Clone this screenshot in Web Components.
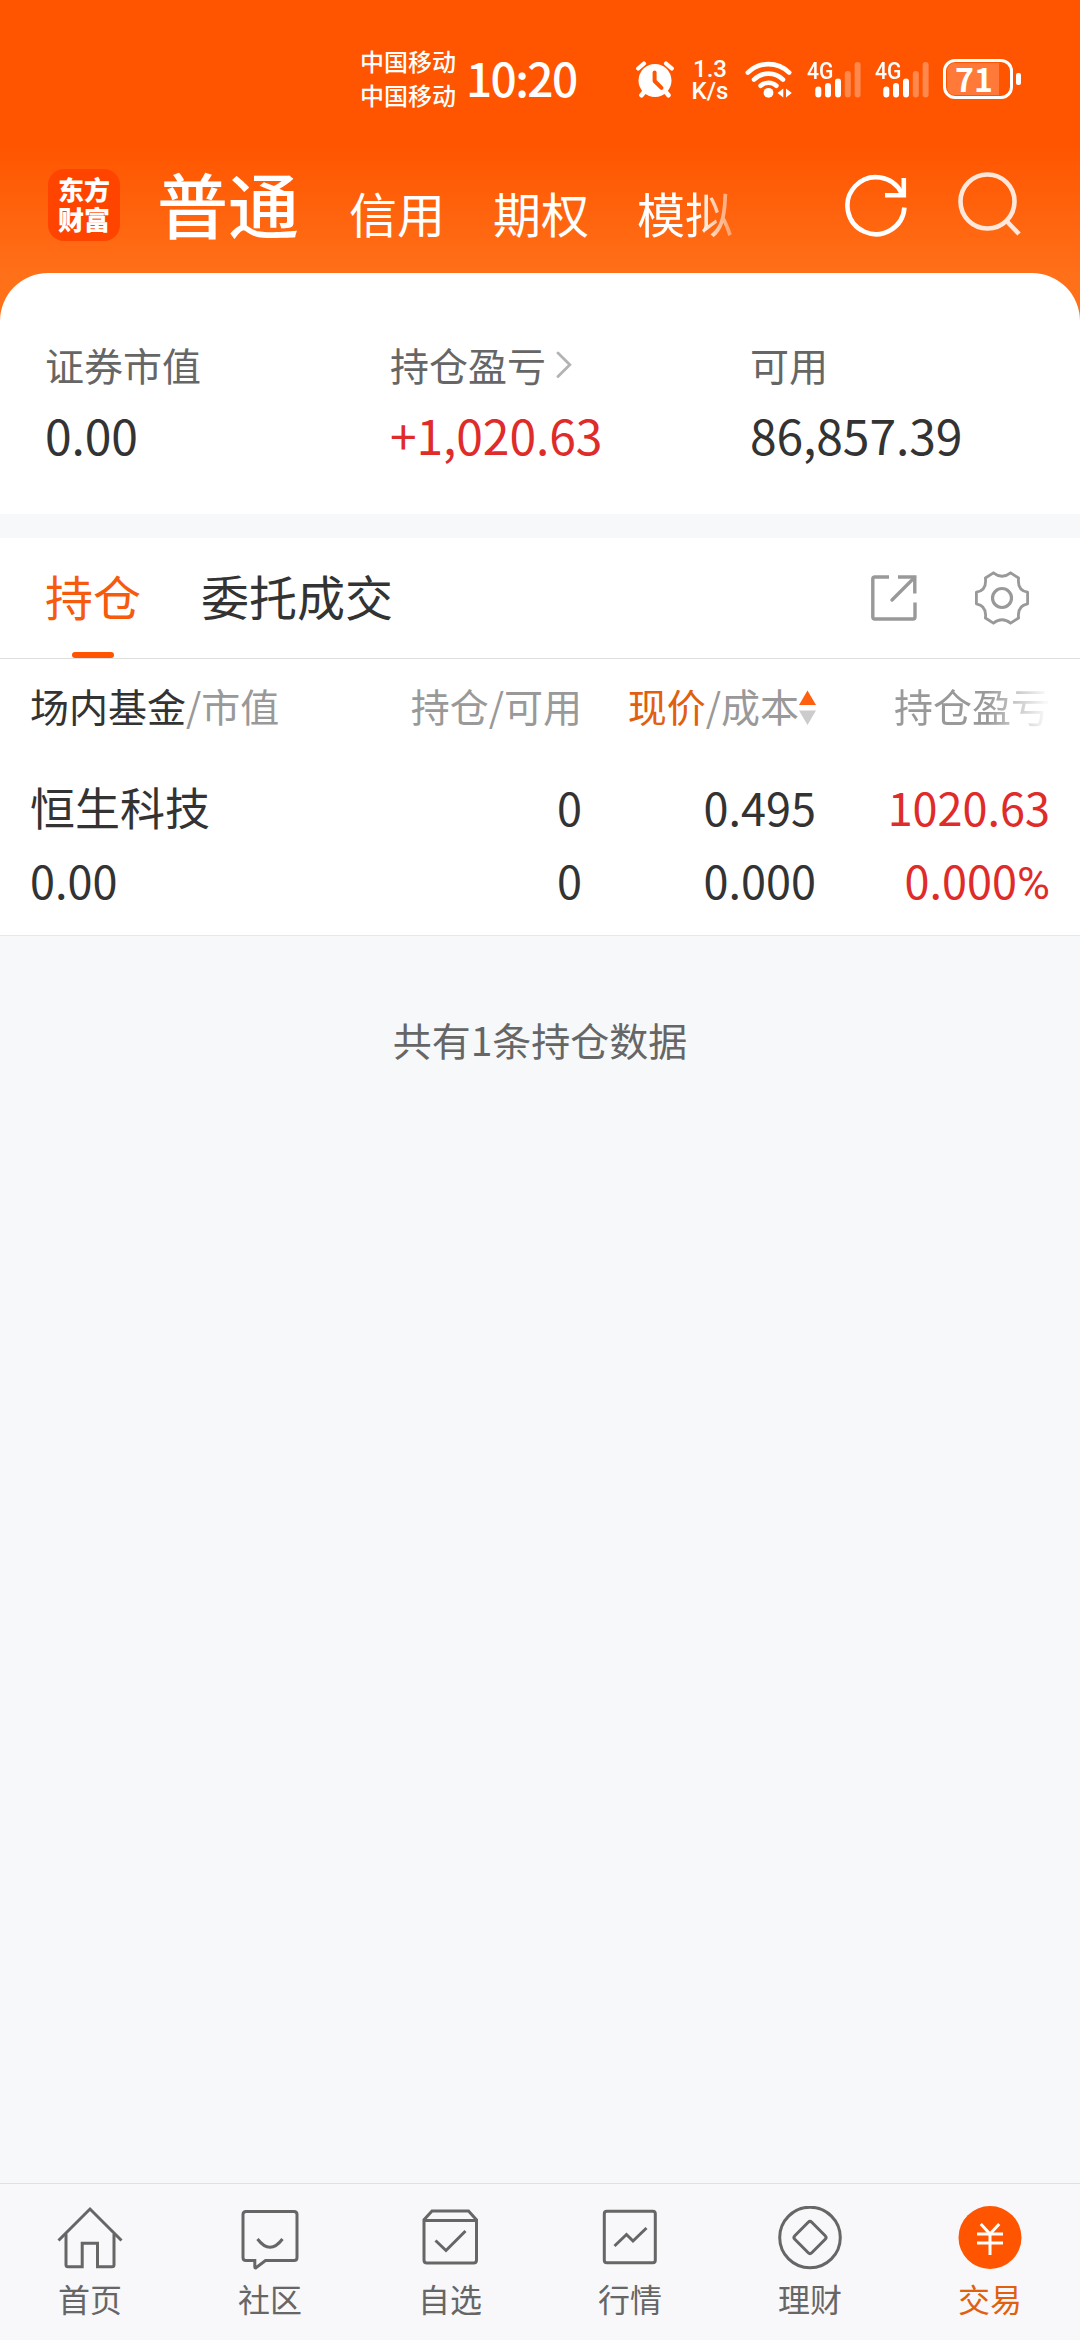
<!DOCTYPE html>
<html lang="zh-CN">
<head>
<meta charset="utf-8">
<title>交易</title>
<style>
  html, body { margin: 0; height: 100%; }
  body {
    width: 1080px;
    height: 2340px;
    overflow: hidden;
    background: #f7f8fa;
    color: #333;
    font-family: "Noto Sans CJK SC", "Noto Sans", sans-serif;
  }
</style>
</head>
<body>
<trade-page></trade-page>

<script>
(function () {
  // small helper: every element is a style block plus markup in an open root
  class BaseElement extends HTMLElement {
    connectedCallback() {
      if (!this.shadowRoot) this.attachShadow({mode: 'open'});
      this.shadowRoot.innerHTML = `
        <style>* { box-sizing: border-box; } svg { display: block; flex: none; } ${this.css()}</style>
        ${this.html()}
      `;
    }
    css() { return ''; }
    html() { return '<slot></slot>'; }
  }

  const ICONS = {
    alarm: [38, 37, `
      <circle cx="19" cy="19.5" r="16.5" fill="currentColor"/>
      <path d="M2.2 7.5 L8 2.5 M35.8 7.5 L30 2.5" stroke="currentColor" stroke-width="4.2" stroke-linecap="round"/>
      <path d="M9 30 L5.5 34.2 M29 30 L32.5 34.2" stroke="currentColor" stroke-width="4.6" stroke-linecap="round"/>
      <path d="M18.6 11.5 V20 L25.5 26.8" stroke="#ff5500" stroke-width="4" stroke-linecap="round" stroke-linejoin="round"/>`],
    wifi: [48, 37, `
      <g stroke="currentColor" stroke-width="4.6" stroke-linecap="round">
        <path d="M2.8 11.6 A29.5 29.5 0 0 1 44.2 11.6"/>
        <path d="M9 18.6 A20.5 20.5 0 0 1 38 18.6"/>
        <path d="M15.6 24.8 A11.6 11.6 0 0 1 31.4 24.8"/>
      </g>
      <circle cx="23.5" cy="31.8" r="4.9" fill="currentColor"/>
      <path d="M38.3 27.5 V36.5 L32.5 32 Z M41 27.5 L46.8 32 L41 36.5 Z" fill="currentColor"/>`],
    signal: [54, 37, `
      <g stroke="currentColor" stroke-width="6" stroke-linecap="round">
        <path d="M11.3 28.5 V33.5 M21 25 V33.5 M31 20.5 V33.5"/>
        <path d="M40.8 13 V33.5 M50.6 4 V33.5" opacity=".3"/>
      </g>`],
    refresh: [62, 64, `
      <path d="M56.5 19 A28.5 28.5 0 1 0 59.4 33.5" stroke="currentColor" stroke-width="4.6"/>
      <path d="M58.8 4 V21.2 H40" stroke="currentColor" stroke-width="4.6"/>`],
    search: [64, 64, `
      <circle cx="29.5" cy="29.5" r="27" stroke="currentColor" stroke-width="4.6"/>
      <path d="M48.5 49 L61 62" stroke="currentColor" stroke-width="4.6"/>`],
    chevron: [16, 28, `
      <path d="M2 3 L13.8 14.8 L2 26.6" stroke="currentColor" stroke-width="2.8" stroke-linecap="round"/>`],
    share: [46, 46, `
      <path d="M18 2 H4 Q1.8 2 1.8 4 V42 Q1.8 44 4 44 H42 Q44 44 44 42 V27.5" stroke="currentColor" stroke-width="3.4"/>
      <path d="M27 2 H43.8 V18.5" stroke="currentColor" stroke-width="3.4"/>
      <path d="M43.5 2.5 L21 25" stroke="currentColor" stroke-width="3.4" stroke-linecap="round"/>`],
    gear: [56, 56, `
      <path transform="translate(28 28)" stroke="currentColor" stroke-width="2.8" stroke-linejoin="round"
        d="M-8.6 -25.2 Q0 -18.4 8.6 -25.2 L16.6 -20 Q15 -7.6 25.6 -5.8 V5.8 Q15 7.6 16.6 20 L8.6 25.2 Q0 18.4 -8.6 25.2 L-16.6 20 Q-15 7.6 -25.6 5.8 V-5.8 Q-15 -7.6 -16.6 -20 Z"/>
      <circle cx="28" cy="28" r="9.5" stroke="currentColor" stroke-width="3.2"/>`],
    home: [66, 66, `
      <path d="M1.5 34.5 L33 3 L64.5 34.5"/>
      <path d="M9 28 V58.7 Q9 60.7 11 60.7 H25.2 V37.3 H40.5 V60.7 H55 Q57 60.7 57 58.7 V28"/>`],
    community: [66, 66, `
      <path d="M8 5.5 H57 Q60 5.5 60 8.5 V51.5 Q60 54.5 57 54.5 H28.5 L19 61.8 Q17.8 62.4 17.8 60.8 V54.5 H9 Q6 54.5 6 51.5 V8.5 Q6 5.5 9 5.5"/>
      <path d="M20.5 33 Q33 49.5 45.5 33"/>`],
    watch: [66, 66, `
      <path d="M6.5 14.5 H59.5 M7 13.8 L15 5 H51.5 L59.5 13.8 V54 Q59.5 57 56.5 57 H10 Q7 57 7 54 Z"/>
      <path d="M18.5 34.5 L29 44.5 L48.5 25"/>`],
    market: [66, 66, `
      <rect x="7.3" y="5.2" width="51" height="51.6" rx="2.5"/>
      <path d="M17.5 40 L29.5 28.5 L36 35 L49.5 22"/>`],
    wealth: [66, 66, `
      <circle cx="33" cy="31.5" r="30.3"/>
      <rect x="21" y="19.5" width="24" height="24" rx="2.5" transform="rotate(45 33 31.5)"/>`],
    trade: [66, 66, `
      <circle cx="33" cy="31.5" r="31.5" fill="#ff5500" stroke="none"/>
      <g stroke="#fff" stroke-width="3">
        <path d="M23.8 18 L33 28 L42.2 18 M33 28 V49"/>
        <path d="M20 28 H46 M20 37 H46"/>
      </g>`]
  };

  class AppIcon extends BaseElement {
    css() { return `:host { display: block; flex: none; line-height: 0; }`; }
    html() {
      const [w, h, body] = ICONS[this.getAttribute('name')];
      return `<svg width="${w}" height="${h}" viewBox="0 0 ${w} ${h}" fill="none" stroke-width="0" aria-hidden="true">${body}</svg>`;
    }
  }

  // same glyph set, drawn with one common outline weight
  class NavIcon extends AppIcon {
    html() {
      const [w, h, body] = ICONS[this.getAttribute('name')];
      return `<svg width="${w}" height="${h}" viewBox="0 0 ${w} ${h}" fill="none" stroke="currentColor" stroke-width="3" aria-hidden="true">${body}</svg>`;
    }
  }

  class StatusBar extends BaseElement {
    css() {
      return `
        :host { display: flex; align-items: center; height: 158px; padding-left: 360px; color: #fff; }
        .carrier { font-size: 24px; line-height: 34px; width: 106px; padding-bottom: 2px; font-weight: 500; }
        .clock { font-size: 46px; line-height: 60px; font-weight: 500; width: 170px; letter-spacing: -1.6px; padding-bottom: 5px; }
        .speed { font: 500 24px/22px "Roboto", sans-serif; width: 40px; margin-left: 16px; text-align: center; padding-top: 2px; }
        .wifi { margin-left: 15px; }
        .cell { position: relative; margin-left: 14px; }
        .cell span { position: absolute; left: 0; top: -1px; font: 500 24px/23px "Roboto", sans-serif; transform: scaleX(.88); transform-origin: 0 0; }
        .battery {
          width: 70px; height: 40px; margin-left: 14px;
          border: 3px solid #fff; border-radius: 12px; padding: 1px;
        }
        .level { width: 52px; height: 32px; background: #ff7938; border-radius: 8px 0 0 8px; text-align: center;
          font: 700 32px/32px "Noto Sans CJK SC", sans-serif; }
        .level span { position: relative; top: -1px; left: 1px; }
        .tip { width: 5px; height: 12px; border-radius: 2px; background: #fff; margin-left: 3px; }
      `;
    }
    html() {
      return `
        <div class="carrier">中国移动<br>中国移动</div>
        <div class="clock">10:20</div>
        <app-icon name="alarm"></app-icon>
        <div class="speed">1.3<br>K/s</div>
        <app-icon class="wifi" name="wifi"></app-icon>
        <div class="cell"><span>4G</span><app-icon name="signal"></app-icon></div>
        <div class="cell"><span>4G</span><app-icon name="signal"></app-icon></div>
        <div class="battery"><div class="level"><span>71</span></div></div>
        <div class="tip"></div>
      `;
    }
  }

  class AppHeader extends BaseElement {
    css() {
      return `
        :host { display: block; height: 321px; background: linear-gradient(#ff5500 145px, #ff7019 275px); color: #fff; }
        .bar { display: flex; height: 115px; padding-left: 48px; }
        .logo {
          width: 72px; height: 72px; margin-top: 11px; padding-top: 5px; border-radius: 16px; background: #ff4400;
          font-size: 26px; line-height: 30px; font-weight: 900; text-align: center; flex: none;
        }
        .accounts { display: flex; align-items: baseline; width: 628px; margin-left: 37px; font-size: 48px; line-height: 88px; gap: 48px; white-space: nowrap; }
        .accounts b { font-size: 71px; font-weight: 500; margin-right: 2px; }
        .fade { -webkit-mask-image: linear-gradient(90deg, #000 64%, rgba(0,0,0,.35) 100%); mask-image: linear-gradient(90deg, #000 64%, rgba(0,0,0,.35) 100%); }
        .refresh { margin: 16px 0 0 60px; }
        .search { margin: 14px 0 0 51px; opacity: .85; }
      `;
    }
    html() {
      return `
        <status-bar></status-bar>
        <div class="bar">
          <div class="logo">东方<br>财富</div>
          <div class="accounts"><b>普通</b><span>信用</span><span>期权</span><span class="fade">模拟</span></div>
          <app-icon class="refresh" name="refresh"></app-icon>
          <app-icon class="search" name="search"></app-icon>
        </div>
      `;
    }
  }

  // label above value; "tone" is up for gains, "link" adds the chevron
  class StatItem extends BaseElement {
    css() {
      return `
        :host { display: block; }
        .label { display: flex; align-items: center; gap: 10px; font-size: 39px; line-height: 60px; height: 60px; color: #666; }
        app-icon { color: #b3b3b3; }
        .value { margin-top: 8px; font-size: 48px; line-height: 64px; color: #333; letter-spacing: -.1px; }
        :host([tone="up"]) .value { color: #e02b2b; }
      `;
    }
    html() {
      const link = this.hasAttribute('link') ? '<app-icon name="chevron"></app-icon>' : '';
      return `
        <div class="label">${this.getAttribute('label')}${link}</div>
        <div class="value"><slot></slot></div>
      `;
    }
  }

  class AssetCard extends BaseElement {
    css() {
      return `
        :host {
          display: grid; grid-template-columns: 345px 360px 1fr; position: relative;
          height: 241px; margin-top: -48px; padding: 61px 0 0 45px;
          background: #fff; border-radius: 48px 48px 0 0;
        }
      `;
    }
  }

  class TabStrip extends BaseElement {
    css() {
      return `
        :host { display: flex; align-items: center; height: 121px; margin-top: 24px; padding: 0 50px 0 45px;
          background: #fff; border-bottom: 1px solid #dfdfdf; font-size: 48px; line-height: 114px; color: #333; }
        .tab { position: relative; height: 120px; margin-right: 60px; }
        .active { color: #f65a0c; }
        .active::after { content: ""; position: absolute; left: 27px; bottom: 0; width: 42px; height: 6px; border-radius: 3px; background: #ff5500; }
        .tools { display: flex; align-items: center; gap: 57px; margin-left: auto; color: #999; }
      `;
    }
    html() {
      return `
        <div class="tab active">持仓</div>
        <div class="tab">委托成交</div>
        <div class="tools"><app-icon name="share"></app-icon><app-icon name="gear"></app-icon></div>
      `;
    }
  }

  class HoldingsTable extends BaseElement {
    css() {
      return `
        :host { display: block; height: 277px; padding: 0 30px; background: #fff; border-bottom: 1px solid #e8e8e8; }
        .head, .row { display: grid; grid-template-columns: 318px 234px 234px 234px; text-align: right; white-space: nowrap; }
        .head > :first-child, .row > :first-child { text-align: left; }
        .head { font-size: 39px; line-height: 92px; height: 111px; color: #999; }
        .dark { color: #333; }
        .sorted { color: #e0600f; }
        .sort { display: flex; justify-content: flex-end; align-items: center; height: 98px; }
        .sort div { height: 98px; }
        .fade { -webkit-mask-image: linear-gradient(90deg, #000 73%, rgba(0,0,0,.08) 98%); mask-image: linear-gradient(90deg, #000 73%, rgba(0,0,0,.08) 98%); }
        .row { font-size: 45px; line-height: 73px; height: 73px; color: #333; }
        .up { color: #e02b2b; }
        .unit { font-family: "Roboto", sans-serif; line-height: 1; }
      `;
    }
    html() {
      return `
        <div class="head">
          <div><span class="dark">场内基金</span>/市值</div>
          <div>持仓/可用</div>
          <div class="sort">
            <div><span class="sorted">现价</span>/成本</div>
            <svg width="17" height="36" viewBox="0 0 17 36"><path d="M0 15 L8.5 .5 L17 15 Z" fill="#ff6010"/><path d="M0 20.5 H17 L8.5 35 Z" fill="#ccc"/></svg>
          </div>
          <div class="fade">持仓盈亏</div>
        </div>
        <div class="row"><div>恒生科技</div><div>0</div><div>0.495</div><div class="up">1020.63</div></div>
        <div class="row"><div>0.00</div><div>0</div><div>0.000</div><div class="up">0.000<span class="unit">%</span></div></div>
      `;
    }
  }

  class NavItem extends BaseElement {
    css() {
      return `
        :host { display: flex; flex-direction: column; align-items: center; flex: 1; padding-top: 22px; color: #666; font-size: 32px; line-height: 48px; }
        .label { margin-top: 2px; }
        :host([active]) { color: #e0600f; }
      `;
    }
    html() {
      return `<nav-icon name="${this.getAttribute('icon')}"></nav-icon><div class="label"><slot></slot></div>`;
    }
  }

  class NavBar extends BaseElement {
    css() {
      return `:host { display: flex; height: 157px; background: #f8f8fa; border-top: 1px solid #e0e0e2; }`;
    }
  }

  class TradePage extends BaseElement {
    css() {
      return `
        :host { display: flex; flex-direction: column; width: 1080px; height: 2340px; }
        .note { flex: 1; padding-top: 71px; text-align: center; font-size: 39px; line-height: 64px; color: #666; }
      `;
    }
    html() {
      return `
        <app-header></app-header>
        <asset-card>
          <stat-item label="证券市值">0.00</stat-item>
          <stat-item label="持仓盈亏" tone="up" link>+1,020.63</stat-item>
          <stat-item label="可用">86,857.39</stat-item>
        </asset-card>
        <tab-strip></tab-strip>
        <holdings-table></holdings-table>
        <div class="note">共有1条持仓数据</div>
        <nav-bar>
          <nav-item icon="home">首页</nav-item>
          <nav-item icon="community">社区</nav-item>
          <nav-item icon="watch">自选</nav-item>
          <nav-item icon="market">行情</nav-item>
          <nav-item icon="wealth">理财</nav-item>
          <nav-item icon="trade" active>交易</nav-item>
        </nav-bar>
      `;
    }
  }

  customElements.define('app-icon', AppIcon);
  customElements.define('nav-icon', NavIcon);
  customElements.define('status-bar', StatusBar);
  customElements.define('app-header', AppHeader);
  customElements.define('stat-item', StatItem);
  customElements.define('asset-card', AssetCard);
  customElements.define('tab-strip', TabStrip);
  customElements.define('holdings-table', HoldingsTable);
  customElements.define('nav-item', NavItem);
  customElements.define('nav-bar', NavBar);
  customElements.define('trade-page', TradePage);
})();
</script>
</body>
</html>
